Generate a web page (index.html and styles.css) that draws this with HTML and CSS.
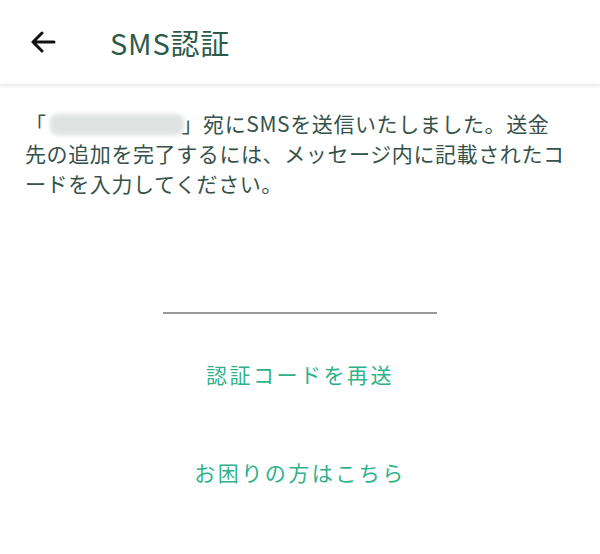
FILE: index.html
```html
<!DOCTYPE html>
<html lang="ja">
<head>
<meta charset="utf-8">
<link rel="stylesheet" href="styles.css">
</head>
<body>
<header class="bar">
  <svg class="back" width="26" height="22" viewBox="0 0 26 22">
    <path d="M24 11H3M12 2L3 11l9 9" fill="none" stroke="#111" stroke-width="3" stroke-linecap="round" stroke-linejoin="round"/>
  </svg>
  <h1 class="title">SMS認証</h1>
</header>
<main class="content">
  <p class="msg">「　　　　　　 」宛にSMSを送信いたしました。送金先の追加を完了するには、メッセージ内に記載されたコードを入力してください。</p>
  <div class="field"><div class="line"></div></div>
  <a class="link resend">認証コードを再送</a>
  <a class="link help">お困りの方はこちら</a>
</main>
</body>
</html>
```
FILE: styles.css
```css
html, body {
  margin: 0;
  padding: 0;
  background: #fff;
  font-family: "Noto Sans CJK JP", "Noto Sans", sans-serif;
}
.bar {
  height: 84px;
  display: flex;
  align-items: center;
  background: #fff;
  box-shadow: 0 2px 4px rgba(0,0,0,0.10);
  position: relative;
}
.back {
  margin-left: 30px;
}
.title {
  margin: 0 0 0 54px;
  font-size: 29px;
  font-weight: 400;
  color: #2d5b4a;
  letter-spacing: 0.8px;
}
.content {
  padding: 24px 25px 0 25px;
  display: flex;
  flex-direction: column;
  align-items: center;
}
.msg {
  position: relative;
  margin: 0;
  padding-right: 5px;
  font-size: 21px;
  line-height: 30px;
  letter-spacing: 0.6px;
  color: #35524a;
  align-self: stretch;
  white-space: normal;
}
/* blurred mask over the hidden phone number */
.msg::before {
  content: "";
  position: absolute;
  left: 25px;
  top: 6px;
  width: 134px;
  height: 21px;
  background: #dfe3e1;
  border-radius: 8px;
  filter: blur(2px);
}
.field {
  margin-top: 114px;
  width: 274px;
}
.line {
  height: 2px;
  background: #9a9a9a;
}
.link {
  display: block;
  font-size: 21px;
  letter-spacing: 2.5px;
  color: #2fb28b;
  text-decoration: none;
}
.resend {
  margin-top: 45px;
}
.help {
  margin-top: 68px;
}
```
